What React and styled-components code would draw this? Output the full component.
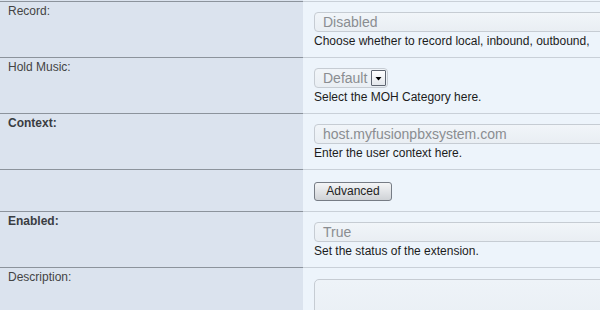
// Imports
import React from 'react';
import styled, { createGlobalStyle } from 'styled-components';

// Global
const GlobalStyle = createGlobalStyle`
	html, body{
		margin: 0;
		padding: 0;
		background-color: #edf4fb;
		font-family: "Liberation Sans", Arial, sans-serif;
		overflow: hidden;
	}
`;

// Composant
const App = () => {

	// Return
	return(
		<>
			<GlobalStyle/>
			<Form>

				{/* Record */}
				<Label>Record:</Label>
				<Field>
					<Select $wide>Disabled</Select>
					<Help>Choose whether to record local, inbound, outbound,</Help>
				</Field>

				{/* Hold Music */}
				<Label>Hold Music:</Label>
				<Field>
					<Select>
						Default
						<Arrow>
							<svg width="9" height="9" viewBox="0 0 9 9">
								<path d="M1.5 3 L7.5 3 L4.5 6.5 Z" fill="#000"/>
							</svg>
						</Arrow>
					</Select>
					<Help>Select the MOH Category here.</Help>
				</Field>

				{/* Context */}
				<Label $bold>Context:</Label>
				<Field>
					<Select $wide>host.myfusionpbxsystem.com</Select>
					<Help>Enter the user context here.</Help>
				</Field>

				{/* Advanced */}
				<Label $compact/>
				<Field $compact>
					<Button type="button">Advanced</Button>
				</Field>

				{/* Enabled */}
				<Label $bold>Enabled:</Label>
				<Field>
					<Select $wide>True</Select>
					<Help>Set the status of the extension.</Help>
				</Field>

				{/* Description */}
				<Label>Description:</Label>
				<Field>
					<TextArea/>
				</Field>

			</Form>
		</>
	);

};

// Styled
const Form = styled.div`
	display: grid;
	grid-template-columns: 303px 1fr;
	padding-top: 1px;
	width: 600px;
	height: 309px;
	overflow: hidden;
	background: linear-gradient(to right, #dbe3ee 303px, #edf4fb 303px);
`;

const Label = styled.div`
	height: ${ props => props.$compact ? '42px' : '56px' };
	padding: 2px 8px 0 8px;
	border-top: 1px solid #8c939c;
	background-color: #dbe3ee;
	font-size: 12px;
	line-height: 14px;
	font-weight: ${ props => props.$bold ? 700 : 400 };
	color: ${ props => props.$bold ? '#3a3d42' : '#444' };
	box-sizing: border-box;
`;

const Field = styled.div`
	height: ${ props => props.$compact ? '42px' : '56px' };
	padding: ${ props => props.$compact ? '11px 0 0 11px' : '10px 0 0 11px' };
	border-top: 1px solid #c9d0d8;
	background-color: #edf4fb;
	box-sizing: border-box;
	overflow: hidden;
	white-space: nowrap;
`;

const Select = styled.div`
	display: ${ props => props.$wide ? 'flex' : 'inline-flex' };
	align-items: center;
	gap: 4px;
	width: ${ props => props.$wide ? '320px' : 'auto' };
	height: 20px;
	padding: 0 1px 0 8px;
	border: 1px solid #c6ccd3;
	border-radius: 4px;
	background: linear-gradient(to bottom, #f1f5f9, #e9eef3);
	font-size: 14px;
	color: #8a8d91;
	box-sizing: border-box;
`;

const Arrow = styled.span`
	display: flex;
	align-items: center;
	justify-content: center;
	width: 15px;
	height: 16px;
	border: 1px solid #5d6470;
	border-radius: 1px;
	background: linear-gradient(to bottom, #ffffff, #e3e7ec);
	box-sizing: border-box;
`;

const Help = styled.div`
	margin-top: 2px;
	font-size: 12px;
	line-height: 14px;
	color: #1c1c1c;
`;

const Button = styled.button`
	width: 78px;
	height: 19px;
	padding: 0;
	border: 1px solid #767c85;
	border-radius: 3px;
	background: linear-gradient(to bottom, #f4f5f6 0%, #e2e4e7 50%, #cfd2d6 100%);
	font-family: "Liberation Sans", Arial, sans-serif;
	font-size: 12px;
	color: #222;
`;

const TextArea = styled.div`
	width: 320px;
	height: 60px;
	margin-top: 1px;
	border: 1px solid #c6ccd3;
	border-radius: 5px;
	background: linear-gradient(to bottom, #eef3f8, #e7edf3);
`;

// Export
export default App;
